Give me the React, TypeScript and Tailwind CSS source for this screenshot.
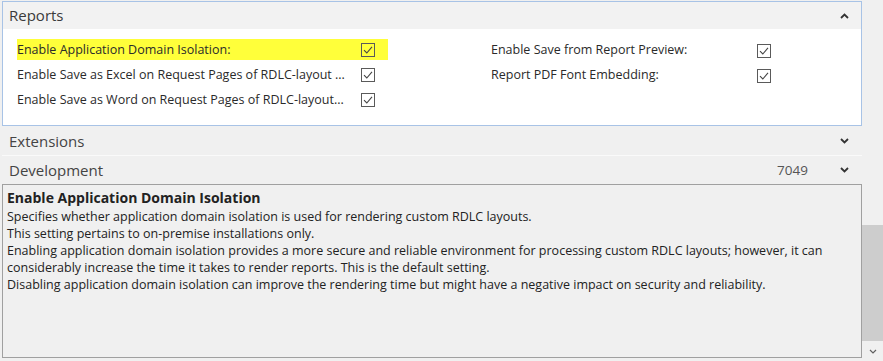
import React from "react";

const font = { fontFamily: '"Open Sans", "Noto Sans", sans-serif' };

function CheckBox() {
  return (
    <svg width="14" height="14" viewBox="0 0 14 14" className="shrink-0">
      <rect x="0.5" y="0.5" width="13" height="13" fill="none" stroke="#5a5a5a" strokeWidth="1" />
      <path d="M3 7.2 L5.8 10 L11 3.8" fill="none" stroke="#444" strokeWidth="1.1" />
    </svg>
  );
}

function Chevron({ up }: { up?: boolean }) {
  return (
    <svg width="9" height="6" viewBox="0 0 9 6">
      <path
        d={up ? "M1 5 L4.5 1.5 L8 5" : "M1 1 L4.5 4.5 L8 1"}
        fill="none"
        stroke="#333"
        strokeWidth="1.8"
      />
    </svg>
  );
}

interface FieldProps {
  label: string;
  labelWidth: string;
  highlight?: boolean;
}

function Field({ label, labelWidth, highlight }: FieldProps) {
  return (
    <div className={`flex items-center h-[21px] ${highlight ? "bg-[#ffff3a] w-[371px]" : ""}`}>
      <span className={`${labelWidth} text-[12.5px] text-[#2a2a2a] whitespace-nowrap leading-[21px]`}>{label}</span>
      <CheckBox />
    </div>
  );
}

export default function App() {
  return (
    <div className="w-[883px] h-[361px] bg-[#f0f0f0] flex overflow-hidden" style={font}>
      <div className="w-[862px] flex flex-col pl-[2px] pt-[1px]">
        {/* Reports */}
        <div className="border border-[#a8c3e6] bg-white h-[125px] flex flex-col">
          <div className="h-[27px] bg-[#f2f2f2] flex items-center justify-between pl-[6px] pr-[12px]">
            <span className="text-[15px] text-[#3a3a3a]">Reports</span>
            <Chevron up />
          </div>
          <div className="flex pt-[10px] pl-[14px]">
            <div className="flex flex-col gap-[4px] w-[474px]">
              <Field label="Enable Application Domain Isolation:" labelWidth="w-[344px]" highlight />
              <Field label="Enable Save as Excel on Request Pages of RDLC-layout ..." labelWidth="w-[344px]" />
              <Field label="Enable Save as Word on Request Pages of RDLC-layout..." labelWidth="w-[344px]" />
            </div>
            <div className="flex flex-col gap-[4px] pt-[1px]">
              <div className="flex items-center h-[21px]">
                <span className="w-[266px] text-[12.5px] text-[#2a2a2a]">Enable Save from Report Preview:</span>
                <CheckBox />
              </div>
              <div className="flex items-center h-[21px]">
                <span className="w-[266px] text-[12.5px] text-[#2a2a2a]">Report PDF Font Embedding:</span>
                <CheckBox />
              </div>
            </div>
          </div>
        </div>

        {/* Collapsed groups */}
        <div className="h-[29px] mt-[1px] flex items-center justify-between pl-[7px] pr-[13px] border-b border-[#fafafa]">
          <span className="text-[15px] text-[#444]">Extensions</span>
          <Chevron />
        </div>
        <div className="h-[28px] flex items-center pl-[7px] pr-[13px]">
          <span className="text-[15px] text-[#444] flex-1">Development</span>
          <span className="text-[13.5px] text-[#555] mr-[32px]">7049</span>
          <Chevron />
        </div>

        {/* Description */}
        <div className="flex-1 mb-[3px] border border-[#a0a0a0] bg-[#f0f0f0] px-[4px] pt-[4px] text-[12.5px] text-[#222] leading-[17px]">
          <div className="text-[14px] font-bold leading-[18px] mb-[1px]">Enable Application Domain Isolation</div>
          <div>Specifies whether application domain isolation is used for rendering custom RDLC layouts.</div>
          <div>This setting pertains to on-premise installations only.</div>
          <div>
            Enabling application domain isolation provides a more secure and reliable environment for processing custom RDLC layouts; however, it can
            considerably increase the time it takes to render reports. This is the default setting.
          </div>
          <div>Disabling application domain isolation can improve the rendering time but might have a negative impact on security and reliability.</div>
        </div>
      </div>

      {/* Scrollbar */}
      <div className="flex-1 flex flex-col">
        <div className="h-[225px] bg-[#f0f0f0]" />
        <div className="flex-1 bg-[#cdcdcd]" />
        <div className="h-[20px] bg-[#f0f0f0] flex items-center justify-center">
          <svg width="8" height="5" viewBox="0 0 8 5">
            <path d="M1 1 L4 4 L7 1" fill="none" stroke="#606060" strokeWidth="1.2" />
          </svg>
        </div>
      </div>
    </div>
  );
}
